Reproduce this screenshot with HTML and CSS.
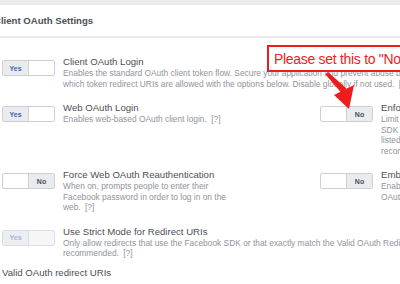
FILE: index.html
```html
<html lang="en">
<head>
    <meta charset="UTF-8">
    <meta name="viewport" content="width=device-width, initial-scale=1.0">
    <title>Client OAuth Settings</title>
    <link rel="stylesheet" href="styles.css">
</head>
<body>
    <div class="topbar"></div>
    <div class="panel">
        <div class="panel-header"><h2>Client OAuth Settings</h2></div>
        <div class="panel-body">
            <div class="settings">
                <div class="setting wide">
                    <div class="toggle"><span class="seg on yes">Yes</span><span class="seg"></span></div>
                    <div class="setting-text">
                        <div class="setting-title">Client OAuth Login</div>
                        <div class="setting-desc">Enables the standard OAuth client token flow. Secure your application and prevent abuse by locking down<br>which token redirect URIs are allowed with the options below. Disable globally if not used. <span class="help">[?]</span></div>
                    </div>
                </div>

                <div class="setting">
                    <div class="toggle"><span class="seg on yes">Yes</span><span class="seg"></span></div>
                    <div class="setting-text">
                        <div class="setting-title">Web OAuth Login</div>
                        <div class="setting-desc">Enables web-based OAuth client login. <span class="help">[?]</span></div>
                    </div>
                </div>
                <div class="setting">
                    <div class="toggle"><span class="seg"></span><span class="seg on no">No</span></div>
                    <div class="setting-text">
                        <div class="setting-title">Enforce HTTPS</div>
                        <div class="setting-desc">Limit redirect URIs and the JavaScript<br>SDK to HTTPS only. Only the URIs<br>listed below will be allowed. Strongly<br>recommended. <span class="help">[?]</span></div>
                    </div>
                </div>

                <div class="setting">
                    <div class="toggle"><span class="seg"></span><span class="seg on no">No</span></div>
                    <div class="setting-text">
                        <div class="setting-title">Force Web OAuth Reauthentication</div>
                        <div class="setting-desc">When on, prompts people to enter their Facebook password in order to log in on the web. <span class="help">[?]</span></div>
                    </div>
                </div>
                <div class="setting">
                    <div class="toggle"><span class="seg"></span><span class="seg on no">No</span></div>
                    <div class="setting-text">
                        <div class="setting-title">Embedded Browser OAuth Login</div>
                        <div class="setting-desc">Enables browser control redirect uri for<br>OAuth client login. <span class="help">[?]</span></div>
                    </div>
                </div>

                <div class="setting wide">
                    <div class="toggle disabled"><span class="seg on yes">Yes</span><span class="seg"></span></div>
                    <div class="setting-text">
                        <div class="setting-title">Use Strict Mode for Redirect URIs</div>
                        <div class="setting-desc">Only allow redirects that use the Facebook SDK or that exactly match the Valid OAuth Redirect URIs. Strongly<br>recommended. <span class="help">[?]</span></div>
                    </div>
                </div>
            </div>
            <div class="field-label">Valid OAuth redirect URIs</div>
        </div>

        <div class="callout">Please set this to "No"</div>
        <svg class="arrow" width="40" height="45" viewBox="0 0 40 45">
            <polygon points="8,2 5.5,4.5 21.5,23 26.5,18.5" fill="#ee1c1c"/>
            <polygon points="14,25 34,15 29,39" fill="#ee1c1c"/>
        </svg>
    </div>
</body>
</html>
```

FILE: styles.css
```css
html, body {
    margin: 0;
    overflow: hidden;
    background-color: #fff;
    font-family: "Liberation Sans", Arial, sans-serif;
}

.topbar {
    height: 5px;
    background-color: #e9ebee;
}

.panel {
    position: relative;
}

.panel-header {
    height: 31px;
    display: flex;
    align-items: center;
    border-bottom: 2px solid #e9ebee;
}

.panel-header h2 {
    margin: 0 0 0 -6px;
    font-size: 9.6px;
    font-weight: bold;
    color: #4b4f56;
}

.panel-body {
    padding: 18px 0 0 2px;
}

.settings {
    display: grid;
    grid-template-columns: 318px 240px;
    row-gap: 13px;
}

.setting {
    display: flex;
    gap: 8px;
}

.setting.wide {
    grid-column: 1 / 3;
}

.setting-text {
    width: 180px;
}

.setting.wide .setting-text {
    width: auto;
    white-space: nowrap;
}

.setting-title {
    font-size: 9.6px;
    line-height: 12px;
    color: #4b4f56;
}

.setting-desc {
    font-size: 8.4px;
    line-height: 10.5px;
    color: #90949c;
}

.help {
    margin-left: 2px;
}

.toggle {
    flex: none;
    display: flex;
    width: 53px;
    height: 16px;
    margin-top: 4px;
    box-sizing: border-box;
    border: 1px solid #ccd0d5;
    border-radius: 2px;
    background-color: #fff;
    overflow: hidden;
}

.seg {
    flex: 1;
    display: flex;
    align-items: center;
    justify-content: center;
    font-size: 7px;
    font-weight: bold;
}

.seg.on {
    background-color: #e9ebee;
}

.seg.yes {
    color: #4267b2;
    border-right: 1px solid #ccd0d5;
}

.seg.no {
    color: #4b4f56;
    border-left: 1px solid #ccd0d5;
}

.toggle.disabled {
    background-color: #f5f6f7;
    border-color: #dddfe2;
}

.toggle.disabled .seg.yes {
    color: #a4b5d8;
    background-color: #eceef1;
    border-color: #dddfe2;
}

.field-label {
    margin-top: 8px;
    font-size: 9.6px;
    line-height: 12px;
    color: #4b4f56;
}

/* annotation laid over the page */
.callout {
    position: absolute;
    left: 267px;
    top: 40px;
    width: 160px;
    height: 27px;
    box-sizing: border-box;
    padding-left: 5px;
    display: flex;
    align-items: center;
    border: 2px solid #ee1c1c;
    background-color: #fff;
    color: #ee1c1c;
    font-size: 14px;
    letter-spacing: -0.3px;
    white-space: nowrap;
}

.arrow {
    position: absolute;
    left: 320px;
    top: 65px;
}
```
